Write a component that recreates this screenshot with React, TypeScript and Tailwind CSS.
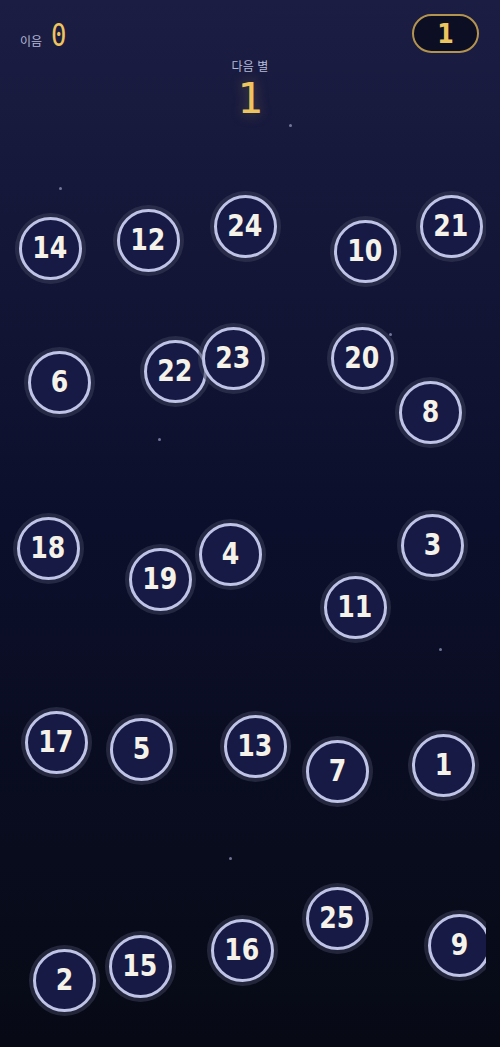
import React from 'react';

type Star = { n: number; x: number; y: number };

// centres of each star node on the board
const STARS: Star[] = [
  { n: 14, x: 50, y: 248 },
  { n: 12, x: 148, y: 240 },
  { n: 24, x: 245, y: 226 },
  { n: 10, x: 365, y: 251 },
  { n: 21, x: 451, y: 226 },
  { n: 6, x: 59, y: 382 },
  { n: 22, x: 175, y: 371 },
  { n: 23, x: 233, y: 358 },
  { n: 20, x: 362, y: 358 },
  { n: 8, x: 430, y: 412 },
  { n: 18, x: 48, y: 548 },
  { n: 19, x: 160, y: 579 },
  { n: 4, x: 230, y: 554 },
  { n: 3, x: 432, y: 545 },
  { n: 11, x: 355, y: 607 },
  { n: 17, x: 56, y: 742 },
  { n: 5, x: 141, y: 749 },
  { n: 13, x: 255, y: 746 },
  { n: 7, x: 337, y: 771 },
  { n: 1, x: 443, y: 765 },
  { n: 25, x: 337, y: 918 },
  { n: 9, x: 459, y: 945 },
  { n: 16, x: 242, y: 950 },
  { n: 15, x: 140, y: 966 },
  { n: 2, x: 64, y: 980 },
];

const DOTS = [
  { x: 290, y: 125 },
  { x: 60, y: 188 },
  { x: 159, y: 439 },
  { x: 440, y: 649 },
  { x: 230, y: 858 },
  { x: 390, y: 334 },
];

const SIZE = 63;

const App: React.FC = () => {
  return (
    <div className="relative w-[500px] h-[1047px] overflow-hidden bg-gradient-to-b from-[#1b1d43] via-[#0c0f2b] to-[#070a15] font-['DejaVu_Sans',sans-serif]">
      {/* board */}
      <div className="absolute left-0 top-0 w-[486px] h-full overflow-hidden">
        {DOTS.map((d, i) => (
          <span
            key={i}
            className="absolute w-[3px] h-[3px] rounded-full bg-[#9aa0c4] opacity-70"
            style={{ left: d.x - 1, top: d.y - 1 }}
          />
        ))}
        {STARS.map((s) => (
          <div
            key={s.n}
            className="absolute flex items-center justify-center rounded-full border-[3px] border-[#bfc3e6] bg-[#161a44] shadow-[0_0_0_4px_rgba(58,62,88,0.55)]"
            style={{ left: s.x - SIZE / 2, top: s.y - SIZE / 2, width: SIZE, height: SIZE }}
          >
            <span className="inline-block scale-x-[0.84] text-[30px] font-bold text-[#f5f2ea] leading-none">
              {s.n}
            </span>
          </div>
        ))}
      </div>

      {/* header */}
      <div className="relative flex items-start justify-between pl-5 pr-[21px] pt-[14px]">
        <div className="flex items-baseline gap-[9px] pt-[5px]">
          <span className="text-[12px] text-[#b3b7d4] font-['Noto_Sans_CJK_KR',sans-serif]">이음</span>
          <span className="inline-block text-[32px] leading-none text-[#eec45e] font-['DejaVu_Sans_Mono',monospace] scale-x-[0.8] origin-left">0</span>
        </div>
        <div className="w-[67px] h-[39px] rounded-full border-2 border-[#b3944f] bg-[#0c0e24] flex items-center justify-center">
          <span className="inline-block scale-x-[0.88] text-[27px] font-bold text-[#eec45e] leading-none">1</span>
        </div>
      </div>
      <div className="relative flex flex-col items-center mt-[4px]">
        <span className="text-[12px] text-[#b7bbd8] tracking-wide font-['Noto_Sans_CJK_KR',sans-serif]">다음 별</span>
        <span className="text-[42px] leading-none mt-[3px] text-[#eec45e] font-['DejaVu_Sans_Mono',monospace] [text-shadow:0_0_14px_rgba(238,196,94,0.35)]">
          1
        </span>
      </div>
    </div>
  );
};

export default App;
